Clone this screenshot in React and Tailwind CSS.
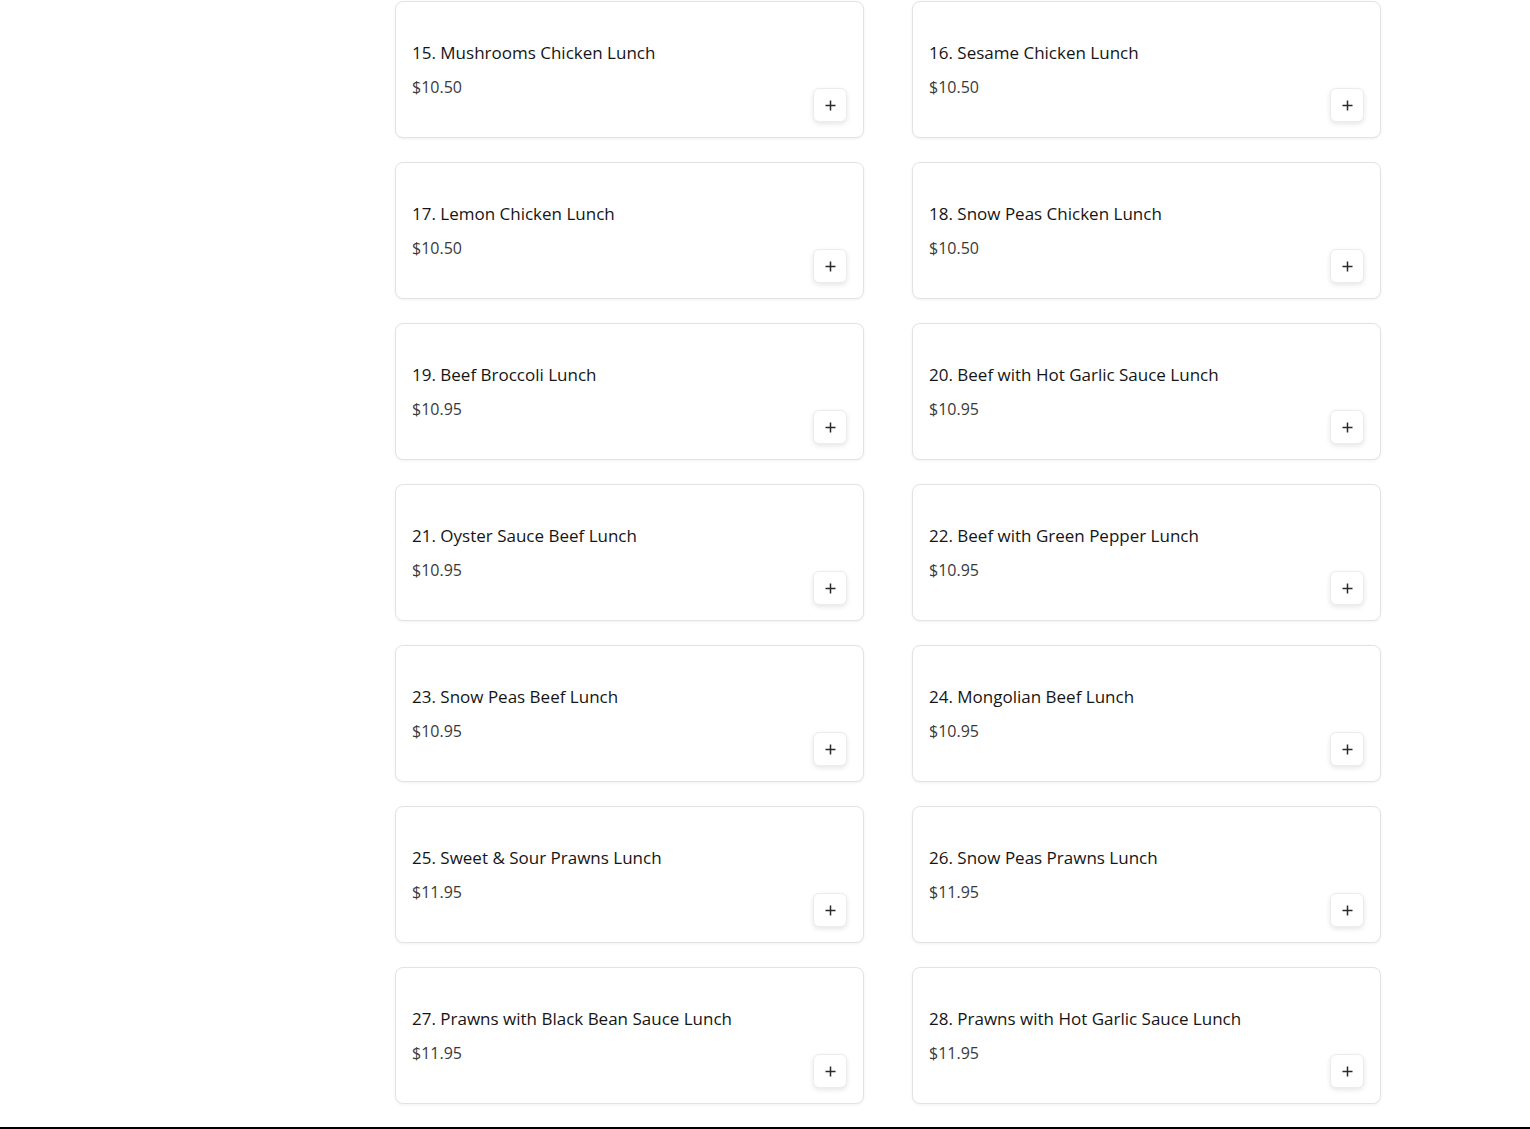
import React from "react";

const items = [
  ["15. Mushrooms Chicken Lunch", "$10.50"],
  ["16. Sesame Chicken Lunch", "$10.50"],
  ["17. Lemon Chicken Lunch", "$10.50"],
  ["18. Snow Peas Chicken Lunch", "$10.50"],
  ["19. Beef Broccoli Lunch", "$10.95"],
  ["20. Beef with Hot Garlic Sauce Lunch", "$10.95"],
  ["21. Oyster Sauce Beef Lunch", "$10.95"],
  ["22. Beef with Green Pepper Lunch", "$10.95"],
  ["23. Snow Peas Beef Lunch", "$10.95"],
  ["24. Mongolian Beef Lunch", "$10.95"],
  ["25. Sweet & Sour Prawns Lunch", "$11.95"],
  ["26. Snow Peas Prawns Lunch", "$11.95"],
  ["27. Prawns with Black Bean Sauce Lunch", "$11.95"],
  ["28. Prawns with Hot Garlic Sauce Lunch", "$11.95"],
];

function Card({ name, price }) {
  return (
    <div className="flex flex-col rounded-lg border border-[#e3e3e3] bg-white px-4 pt-[39px] pb-[15px] shadow-[0_1px_3px_rgba(0,0,0,0.06)]">
      <div className="h-6 text-[17px] leading-6 font-medium text-[#151515]">{name}</div>
      <div className="mt-[11px] h-[22px] text-[16px] leading-[22px] text-[#3a3a3a]">{price}</div>
      <div className="-mt-[10px] flex justify-end">
        <button className="flex h-[34px] w-[34px] items-center justify-center rounded-md border border-[#ececec] bg-white shadow-[0_2px_5px_rgba(0,0,0,0.1)]">
          <svg width="11" height="11" viewBox="0 0 11 11" fill="none">
            <path d="M5.5 0.5V10.5M0.5 5.5H10.5" stroke="#2a2a2a" strokeWidth="1.5" />
          </svg>
        </button>
      </div>
    </div>
  );
}

export default function App() {
  return (
    <div className="min-h-screen bg-white" style={{ fontFamily: '"Open Sans", "Liberation Sans", sans-serif' }}>
      <div className="flex">
        <aside className="w-[395px] shrink-0" />
        <main className="w-[986px] pt-px">
          <div className="grid grid-cols-2 gap-x-12 gap-y-6">
            {items.map(([n, p]) => (
              <Card key={n} name={n} price={p} />
            ))}
          </div>
        </main>
      </div>
      <div className="mt-[23px] border-t-2 border-black" />
    </div>
  );
}
